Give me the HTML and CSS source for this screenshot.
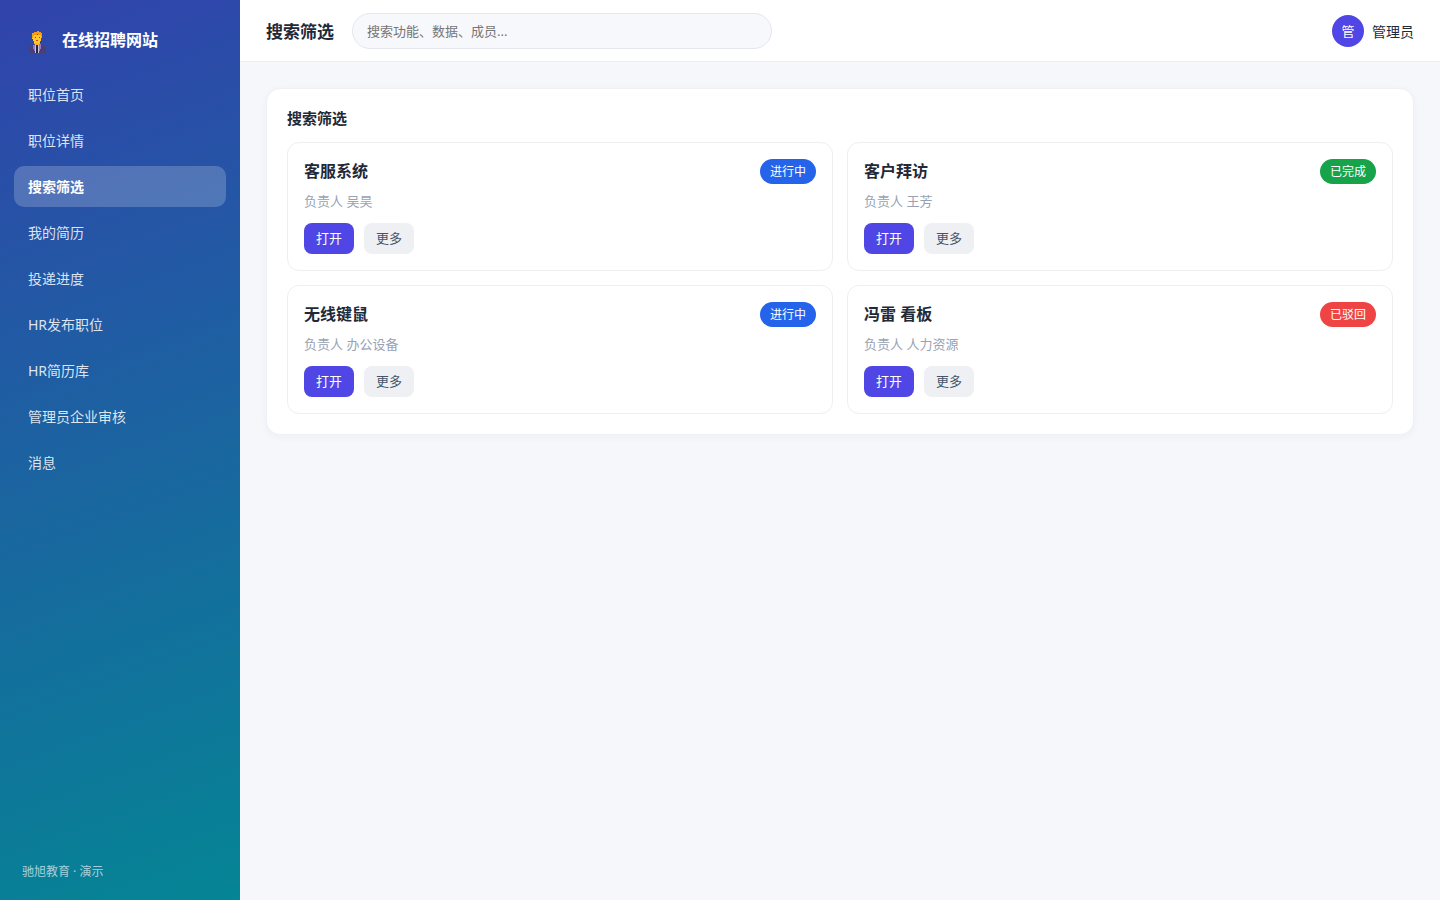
FILE: index.html
```html
<!DOCTYPE html>
<html lang="zh-CN">

<head>
  <meta charset="UTF-8">
  <meta name="viewport" content="width=device-width, initial-scale=1.0">
  <title>搜索筛选 - 在线招聘网站</title>
  <link rel="stylesheet" href="styles.css">
</head>

<body>
  <div class="layout">
    <aside class="sidebar">
      <div class="brand">
        <svg class="logo" viewBox="0 0 18 22" shape-rendering="crispEdges" aria-hidden="true">
          <path fill="#483f72" d="M0 22v-5h1v-2h2v-1h2v-1h7v1h2v1h2v2h1v5z" />
          <path fill="#9575cd" d="M4 14h2v4h1v4H6v-2H5v-2H4zM10 13h2v5h-1v2h-1v2H9v-4h1z" />
          <path fill="#c9c3e3" d="M6 14h1v8H6zM9 14h1v8H9z" />
          <path fill="#28243f" d="M7 14h2v8H7z" />
          <path fill="#f5b921" d="M5 11h6v2h-1v1H6v-1H5z" />
          <path fill="#ffca28" d="M3 4h9v6h-1v2H5v-2H4V8H3z" />
          <path fill="#f79a16" d="M3 7V2h2V1h3V0h2v1h2v1h1v5h-1V4H9V3H8v1H5v1H4v2z" />
          <path fill="#704b25" d="M6 6h1v1H6zM10 6h1v1h-1z" />
          <path fill="#e53935" d="M7 9h2v1H7z" />
        </svg>
        <span>在线招聘网站</span>
      </div>
      <nav class="nav">
        <a href="#">职位首页</a>
        <a href="#">职位详情</a>
        <a href="#" class="active">搜索筛选</a>
        <a href="#">我的简历</a>
        <a href="#">投递进度</a>
        <a href="#">HR发布职位</a>
        <a href="#">HR简历库</a>
        <a href="#">管理员企业审核</a>
        <a href="#">消息</a>
      </nav>
      <div class="side-foot">驰旭教育 · 演示</div>
    </aside>
    <div class="main">
      <header class="topbar">
        <h1>搜索筛选</h1>
        <input class="search" type="search" placeholder="搜索功能、数据、成员..." aria-label="搜索">
        <div class="user">
          <span class="avatar">管</span>
          <span>管理员</span>
        </div>
      </header>
      <main class="content">
        <section class="panel">
          <h2>搜索筛选</h2>
          <div class="grid">
            <div class="card">
              <div class="card-head">
                <h3>客服系统</h3>
                <span class="tag blue">进行中</span>
              </div>
              <p>负责人 吴昊</p>
              <div class="actions">
                <button type="button" class="btn primary">打开</button>
                <button type="button" class="btn">更多</button>
              </div>
            </div>
            <div class="card">
              <div class="card-head">
                <h3>客户拜访</h3>
                <span class="tag green">已完成</span>
              </div>
              <p>负责人 王芳</p>
              <div class="actions">
                <button type="button" class="btn primary">打开</button>
                <button type="button" class="btn">更多</button>
              </div>
            </div>
            <div class="card">
              <div class="card-head">
                <h3>无线键鼠</h3>
                <span class="tag blue">进行中</span>
              </div>
              <p>负责人 办公设备</p>
              <div class="actions">
                <button type="button" class="btn primary">打开</button>
                <button type="button" class="btn">更多</button>
              </div>
            </div>
            <div class="card">
              <div class="card-head">
                <h3>冯雷 看板</h3>
                <span class="tag red">已驳回</span>
              </div>
              <p>负责人 人力资源</p>
              <div class="actions">
                <button type="button" class="btn primary">打开</button>
                <button type="button" class="btn">更多</button>
              </div>
            </div>
          </div>
        </section>
      </main>
    </div>
  </div>
</body>

</html>
```
FILE: styles.css
```css
* {
  margin: 0;
  padding: 0;
  box-sizing: border-box;
}

body {
  font-family: "Noto Sans", "Noto Sans CJK SC", sans-serif;
  font-size: 14px;
  color: #1f2937;
  background: #f5f7fb;
}

.layout {
  display: flex;
  min-height: 100vh;
}

/* 侧边栏 */
.sidebar {
  width: 240px;
  flex-shrink: 0;
  display: flex;
  flex-direction: column;
  padding: 22px 14px 18px;
  background: linear-gradient(160deg, #3143ac, #058595);
  color: #fff;
}

.brand {
  display: flex;
  align-items: flex-start;
  gap: 15px;
  padding: 6px 0 0 15px;
  margin-bottom: 21px;
  font-size: 16px;
  font-weight: 700;
  line-height: 25px;
}

.logo {
  width: 18px;
  height: 22px;
  margin-top: 3px;
}

.nav {
  display: flex;
  flex-direction: column;
  gap: 5px;
}

.nav a {
  padding: 10px 14px;
  line-height: 21px;
  border-radius: 10px;
  color: rgba(255, 255, 255, 0.85);
  text-decoration: none;
}

.nav a.active {
  background: rgba(255, 255, 255, 0.2);
  color: #fff;
  font-weight: 700;
}

.side-foot {
  margin-top: auto;
  padding-left: 8px;
  font-size: 12px;
  line-height: 20px;
  color: rgba(255, 255, 255, 0.65);
}

/* 顶栏 */
.main {
  flex: 1;
  min-width: 0;
}

.topbar {
  display: flex;
  align-items: center;
  gap: 18px;
  height: 62px;
  padding: 0 26px;
  background: #fff;
  border-bottom: 1px solid #eceef3;
}

.topbar h1 {
  font-size: 17px;
  white-space: nowrap;
}

.search {
  width: 420px;
  height: 36px;
  padding: 0 14px;
  border: 1px solid #e5e7ef;
  border-radius: 18px;
  background: #f7f8fc;
  font-family: inherit;
  font-size: 13px;
  outline: none;
  appearance: none;
}

.search::placeholder {
  color: #757575;
}

.user {
  display: flex;
  align-items: center;
  gap: 8px;
  margin-left: auto;
  white-space: nowrap;
}

.avatar {
  width: 32px;
  height: 32px;
  border-radius: 50%;
  background: #4f46e5;
  color: #fff;
  font-size: 13px;
  line-height: 32px;
  text-align: center;
}

/* 内容 */
.content {
  padding: 26px;
}

.panel {
  padding: 20px;
  border: 1px solid #eff0f5;
  border-radius: 14px;
  background: #fff;
  box-shadow: 0 2px 8px rgba(30, 41, 90, 0.04);
}

.panel h2 {
  margin-bottom: 14px;
  font-size: 15px;
  line-height: 19px;
}

.grid {
  display: grid;
  grid-template-columns: repeat(2, 1fr);
  gap: 14px;
}

.card {
  padding: 16px;
  border: 1px solid #eeeff3;
  border-radius: 12px;
}

.card-head {
  display: flex;
  align-items: center;
  justify-content: space-between;
}

.card h3 {
  font-size: 16px;
  line-height: 25px;
}

.card p {
  margin: 8px 0 12px;
  font-size: 13px;
  line-height: 19px;
  color: #98a2b3;
}

.tag {
  padding: 4px 10px;
  border-radius: 13px;
  font-size: 12px;
  line-height: 17px;
  color: #fff;
}

.tag.blue {
  background: #2563eb;
}

.tag.green {
  background: #16a34a;
}

.tag.red {
  background: #ef4444;
}

.actions {
  display: flex;
  gap: 10px;
}

.btn {
  padding: 6px 12px;
  border: none;
  border-radius: 8px;
  background: #eef0f4;
  color: #475569;
  font-family: inherit;
  font-size: 13px;
  line-height: 19px;
  cursor: pointer;
}

.btn.primary {
  background: #4f46e5;
  color: #fff;
}
```
